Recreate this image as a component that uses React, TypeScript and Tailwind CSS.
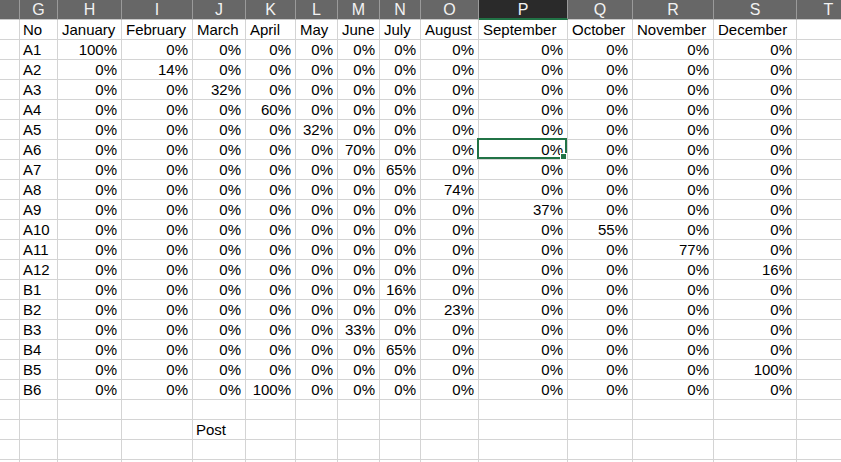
import React from "react"

const columns = ["", "G", "H", "I", "J", "K", "L", "M", "N", "O", "P", "Q", "R", "S", "T"]

const months = [
  "January",
  "February",
  "March",
  "April",
  "May",
  "June",
  "July",
  "August",
  "September",
  "October",
  "November",
  "December",
]

// [label, month index, value]
const data: [string, number, number][] = [
  ["A1", 0, 100],
  ["A2", 1, 14],
  ["A3", 2, 32],
  ["A4", 3, 60],
  ["A5", 4, 32],
  ["A6", 5, 70],
  ["A7", 6, 65],
  ["A8", 7, 74],
  ["A9", 8, 37],
  ["A10", 9, 55],
  ["A11", 10, 77],
  ["A12", 11, 16],
  ["B1", 6, 16],
  ["B2", 7, 23],
  ["B3", 5, 33],
  ["B4", 6, 65],
  ["B5", 11, 100],
  ["B6", 3, 100],
]

const cell =
  "h-[20px] border-r border-b border-[#d4d4d4] whitespace-nowrap overflow-visible leading-[20px]"

function Selection() {
  return (
    <div className="pointer-events-none absolute -left-[2px] -top-[2px] right-0 bottom-0 border-2 border-[#217346]">
      <div className="absolute -right-[2px] -bottom-[3px] w-[7px] h-[7px] bg-[#217346] border border-white" />
    </div>
  )
}

function HeaderRow() {
  return (
    <>
      {columns.map((c) => (
        <div
          key={c || "blank"}
          className={
            c === "P"
              ? "h-[20px] bg-[#2a2a2a] border-r border-[#9a9a9a] border-b-2 border-b-[#217346] text-center text-[16px] leading-[19px] text-[#f2f2f2]"
              : "h-[20px] bg-[#676767] border-r border-[#9a9a9a] border-b border-b-[#c8c8c8] text-center text-[16px] leading-[19px] text-[#f2f2f2]"
          }
        >
          {c}
        </div>
      ))}
    </>
  )
}

function TitleRow() {
  return (
    <>
      <div className={cell} />
      <div className={`${cell} pl-[3px]`}>No</div>
      {months.map((m) => (
        <div key={m} className={`${cell} pl-[4px]`}>
          {m}
        </div>
      ))}
      <div className={cell} />
    </>
  )
}

function DataRow({ label, month, value }: { label: string; month: number; value: number }) {
  return (
    <>
      <div className={cell} />
      <div className={`${cell} pl-[3px]`}>{label}</div>
      {months.map((m, i) => (
        <div key={m} className={`${cell} relative text-right pr-[4px]`}>
          {i === month ? value : 0}%
          {label === "A6" && i === 8 && <Selection />}
        </div>
      ))}
      <div className={cell} />
    </>
  )
}

function EmptyRow({ note }: { note?: string }) {
  return (
    <>
      {columns.map((c) => (
        <div key={c || "blank"} className={`${cell} ${c === "J" ? "pl-[3px]" : ""}`}>
          {c === "J" ? note : null}
        </div>
      ))}
    </>
  )
}

export default function App() {
  return (
    <div
      className="w-[841px] h-[462px] overflow-hidden bg-white text-black text-[15px]"
      style={{ fontFamily: '"Liberation Sans", Arial, sans-serif' }}
    >
      <div className="grid grid-cols-[20px_38px_64px_71px_53px_50px_42px_42px_41px_58px_89px_65px_81px_83px_64px] w-max">
        <HeaderRow />
        <TitleRow />
        {data.map(([label, month, value]) => (
          <DataRow key={label} label={label} month={month} value={value} />
        ))}
        <EmptyRow />
        <EmptyRow note="Post" />
        <EmptyRow />
        <EmptyRow />
      </div>
    </div>
  )
}
